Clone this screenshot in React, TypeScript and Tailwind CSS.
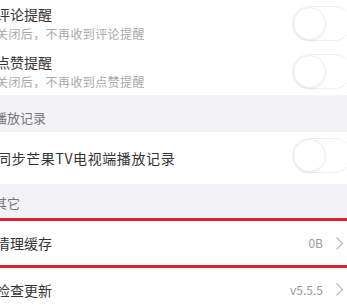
const font = { fontFamily: '"Noto Sans CJK SC", "Noto Sans", sans-serif' };

function Toggle() {
    return (
        <div className="relative h-[35px] w-[60px] shrink-0 mr-[-5px] rounded-full border border-[#efeff1] bg-white">
            <div className="absolute left-[0px] top-[0px] h-[33px] w-[33px] rounded-full bg-white border border-[#ececee] shadow-[0_2px_2px_rgba(0,0,0,0.04)]" />
        </div>
    );
}

function Chevron() {
    return (
        <svg width="9" height="15" viewBox="0 0 9 15" className="ml-[12px]">
            <polyline points="1.5,1.5 7.5,7.5 1.5,13.5" fill="none" stroke="#b8b8bb" strokeWidth="1.1" />
        </svg>
    );
}

function SwitchRow({ title, sub }: { title: string; sub: string }) {
    return (
        <div className="flex h-[48px] items-center justify-between bg-white">
            <div className="flex flex-col ml-[-4px]">
                <span className="text-[14px] leading-[20px] text-[#333]">{title}</span>
                <span className="mt-[2px] text-[12px] leading-[16px] tracking-[0.4px] text-[#aaa]">{sub}</span>
            </div>
            <Toggle />
        </div>
    );
}

function Header({ label, h, pt }: { label: string; h: string; pt: string }) {
    return (
        <div className={`bg-[#f3f3f5] ${h} ${pt}`}>
            <span className="ml-[-6px] block text-[13px] leading-[16px] text-[#777]">{label}</span>
        </div>
    );
}

export default function App() {
    return (
        <div className="w-[347px] h-[305px] overflow-hidden bg-white" style={font}>
            <div className="mt-[-1px]">
                <SwitchRow title="评论提醒" sub="关闭后，不再收到评论提醒" />
                <SwitchRow title="点赞提醒" sub="关闭后，不再收到点赞提醒" />
            </div>
            <Header label="播放记录" h="h-[37px]" pt="pt-[15px]" />
            <div className="flex h-[52px] items-center justify-between bg-white">
                <span className="ml-[-3px] text-[14px] leading-[20px] tracking-[0.6px] text-[#333]">同步芒果TV电视端播放记录</span>
                <div className="mb-[5px]">
                    <Toggle />
                </div>
            </div>
            <Header label="其它" h="h-[34px]" pt="pt-[11px]" />
            <div className="flex h-[50px] items-center justify-between border-y-[3px] border-[#d7242e] bg-white pr-[3px]">
                <span className="ml-[-4px] text-[14px] leading-[20px] text-[#333]">清理缓存</span>
                <div className="flex items-center">
                    <span className="text-[12px] text-[#999]">0B</span>
                    <Chevron />
                </div>
            </div>
            <div className="flex h-[46px] items-center justify-between bg-white pr-[3px]">
                <span className="ml-[-4px] mt-[-3px] text-[14px] leading-[20px] text-[#333]">检查更新</span>
                <div className="flex items-center mt-[-3px]">
                    <span className="text-[12px] text-[#999]">v5.5.5</span>
                    <Chevron />
                </div>
            </div>
        </div>
    );
}
